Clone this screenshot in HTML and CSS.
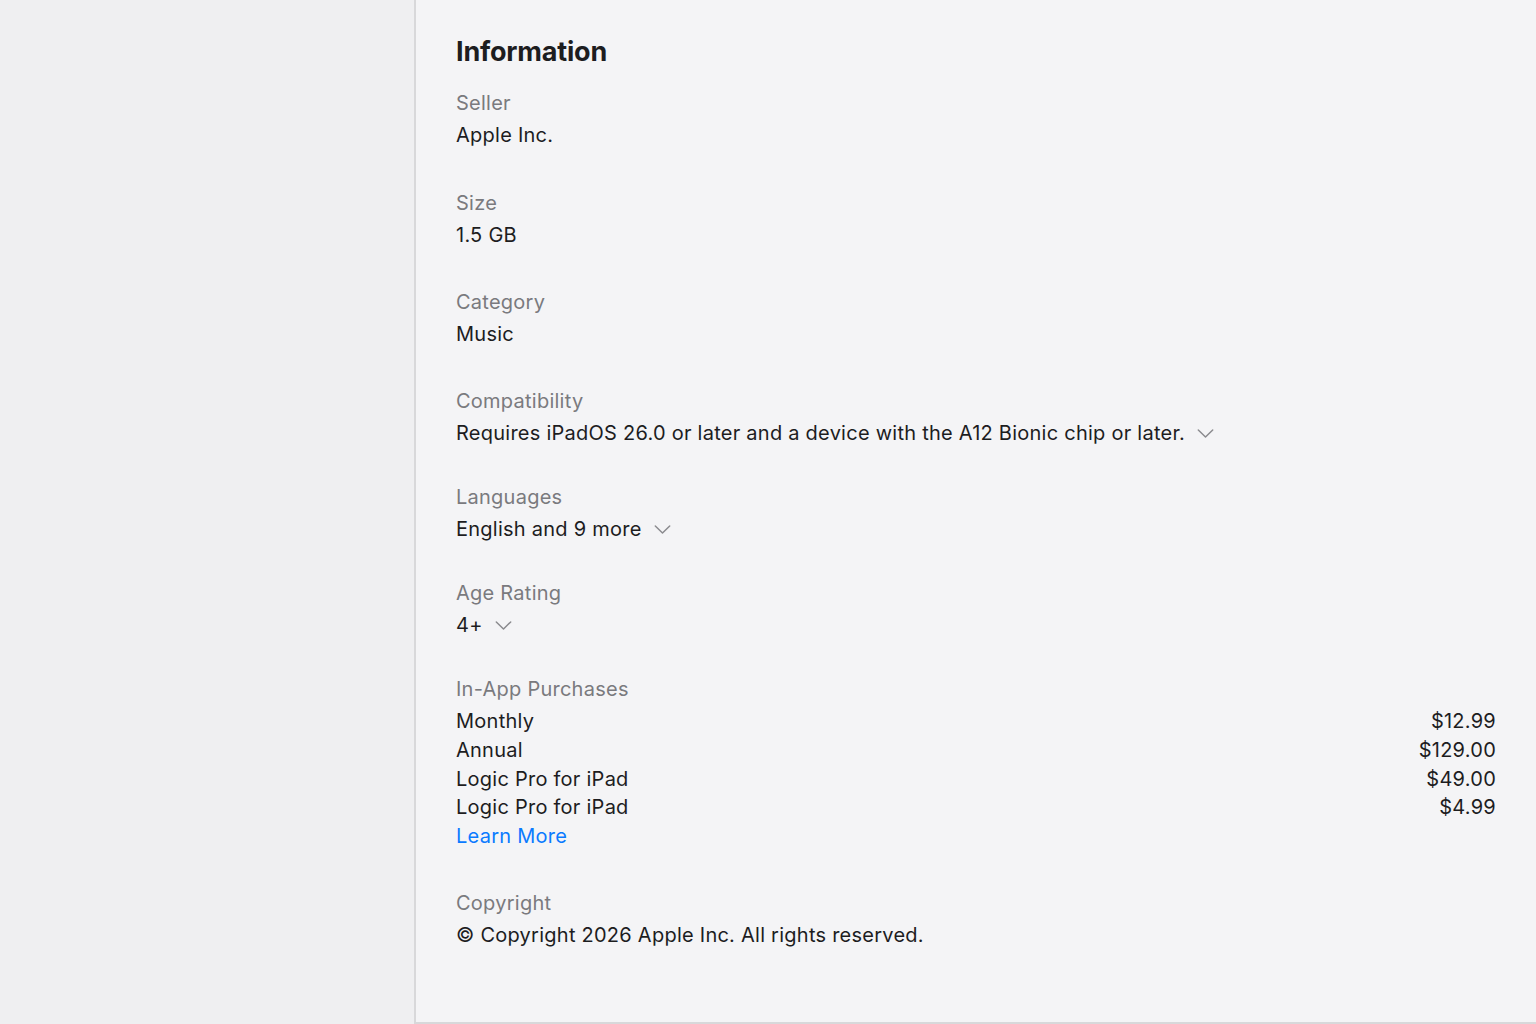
FILE: index.html
```html
<!DOCTYPE html>
<html lang="en">
<head>
<meta charset="utf-8">
<title>Information</title>
<link rel="stylesheet" href="styles.css">
</head>
<body>
<div class="app">
  <aside class="sidebar"></aside>
  <main class="main">
    <h1 class="title">Information</h1>
    <section class="group">
      <div class="label">Seller</div>
      <div class="value">Apple Inc.</div>
    </section>
    <section class="group minus">
      <div class="label">Size</div>
      <div class="value">1.5 GB</div>
    </section>
    <section class="group minus">
      <div class="label">Category</div>
      <div class="value">Music</div>
    </section>
    <section class="group tight">
      <div class="label">Compatibility</div>
      <div class="value expand">Requires iPadOS 26.0 or later and a device with the A12 Bionic chip or later.<svg class="chev" viewBox="0 0 18 10" width="17" height="9"><path d="M1 1l8 8 8-8"/></svg></div>
    </section>
    <section class="group tight">
      <div class="label">Languages</div>
      <div class="value expand">English and 9 more<svg class="chev" viewBox="0 0 18 10" width="17" height="9"><path d="M1 1l8 8 8-8"/></svg></div>
    </section>
    <section class="group tight">
      <div class="label">Age Rating</div>
      <div class="value expand">4+<svg class="chev" viewBox="0 0 18 10" width="17" height="9"><path d="M1 1l8 8 8-8"/></svg></div>
    </section>
    <section class="group plus">
      <div class="label">In-App Purchases</div>
      <ul class="iap">
        <li class="iap-row"><span>Monthly</span><span>$12.99</span></li>
        <li class="iap-row"><span>Annual</span><span>$129.00</span></li>
        <li class="iap-row"><span>Logic Pro for iPad</span><span>$49.00</span></li>
        <li class="iap-row"><span>Logic Pro for iPad</span><span>$4.99</span></li>
      </ul>
      <a class="link" href="#">Learn More</a>
    </section>
    <section class="group">
      <div class="label">Copyright</div>
      <div class="value">© Copyright 2026 Apple Inc. All rights reserved.</div>
    </section>
  </main>
</div>
</body>
</html>
```
FILE: styles.css
```css
html, body {
  margin: 0;
  padding: 0;
  height: 100%;
}
body {
  font-family: Inter, "Noto Sans", "Liberation Sans", sans-serif;
  color: #1d1d1f;
  background: #f4f4f6;
}
.app {
  display: flex;
  height: 1024px;
  overflow: hidden;
}
.sidebar {
  width: 414px;
  flex: none;
  background: #efeff1;
  border-right: 2px solid #d8d8da;
}
.main {
  flex: 1;
  box-sizing: border-box;
  height: 1024px;
  padding: 33px 40px 0 40px;
  background: #f4f4f6;
  border-bottom: 2px solid #d8d8da;
}
.title {
  margin: 0 0 16px 0;
  font-size: 27px;
  line-height: 38px;
  font-weight: 700;
  letter-spacing: -0.2px;
}
.group {
  margin-bottom: 36px;
}
.group.minus {
  margin-bottom: 35px;
}
.group.tight {
  margin-bottom: 32px;
}
.group.plus {
  margin-bottom: 37px;
}
.label {
  font-size: 20px;
  line-height: 32px;
  color: #7a7a7e;
  letter-spacing: 0.25px;
}
.value {
  font-size: 20px;
  line-height: 32px;
  color: #1d1d1f;
  letter-spacing: 0.25px;
}
.expand {
  display: flex;
  align-items: center;
}
.chev {
  margin-left: 12px;
  fill: none;
  stroke: #8a8a8e;
  stroke-width: 1.6;
  stroke-linecap: round;
  stroke-linejoin: round;
}
.iap {
  list-style: none;
  margin: 0;
  padding: 0;
}
.iap-row {
  display: flex;
  justify-content: space-between;
  font-size: 20px;
  line-height: 28.75px;
  letter-spacing: 0.25px;
}
.iap-row:first-child {
  margin-top: 2px;
}
.link {
  display: block;
  font-size: 20px;
  line-height: 28px;
  color: #0a7aff;
  text-decoration: none;
  letter-spacing: 0.25px;
  width: max-content;
}
```
